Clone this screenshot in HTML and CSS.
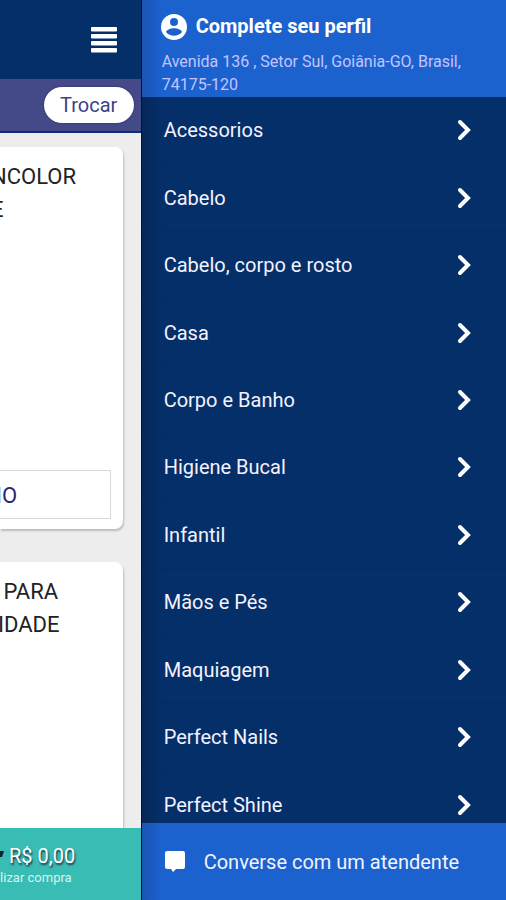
FILE: index.html
```html
<!DOCTYPE html>
<html lang="pt-BR">
<head>
<meta charset="utf-8">
<meta name="viewport" content="width=device-width, initial-scale=1">
<title>Menu</title>
<link rel="stylesheet" href="styles.css">
</head>
<body>
<div class="app">
  <main class="shop">
    <header class="topbar">
      <button class="menu-button" type="button" aria-label="Menu">
        <svg width="28" height="28" viewBox="0 0 28 28"><g fill="#fff"><rect x="1" y="1" width="26" height="4.600" rx="1"/><rect x="1" y="8" width="26" height="4.600" rx="1"/><rect x="1" y="15" width="26" height="4.600" rx="1"/><rect x="1" y="22" width="26" height="4.600" rx="1"/></g></svg>
      </button>
    </header>
    <div class="addressbar"><button class="change" type="button">Trocar</button></div>
    <div class="products">
      <article class="card">
        <h2 class="title">NCOLOR<br>E</h2>
        <button class="add" type="button">IO</button>
      </article>
      <article class="card card-last">
        <h2 class="title title-inner">&nbsp;PARA<br>IDADE</h2>
      </article>
    </div>
    <a class="cart" href="#">
      <span class="total"><svg width="8" height="18" viewBox="0 0 8 18"><path d="M0 4h8L6 10H0zM0 12h4v4H0z" fill="#123"/></svg>R$ 0,00</span>
      <span class="finish">alizar compra</span>
    </a>
  </main>
  <aside class="drawer">
    <header class="profile">
      <a class="profile-link" href="#">
        <svg width="28" height="28" viewBox="0 0 28 28"><circle cx="14" cy="15" r="13" fill="#fff"/><circle cx="14" cy="10" r="4" fill="#1b62cf"/><path d="M6 20c2-5 14-5 16 0-4 5-12 5-16 0z" fill="#1b62cf"/></svg>
        <span>Complete seu perfil</span>
      </a>
      <p class="address">Avenida 136 , Setor Sul, Goiânia-GO, Brasil, 74175-120</p>
    </header>
    <nav class="categories">
      <ul class="list">
        <li><a href="#">Acessorios<svg class="chevron" viewBox="0 0 14 22"><path d="M3 3l8 8-8 8"/></svg></a></li>
        <li><a href="#">Cabelo<svg class="chevron" viewBox="0 0 14 22"><path d="M3 3l8 8-8 8"/></svg></a></li>
        <li><a href="#">Cabelo, corpo e rosto<svg class="chevron" viewBox="0 0 14 22"><path d="M3 3l8 8-8 8"/></svg></a></li>
        <li><a href="#">Casa<svg class="chevron" viewBox="0 0 14 22"><path d="M3 3l8 8-8 8"/></svg></a></li>
        <li><a href="#">Corpo e Banho<svg class="chevron" viewBox="0 0 14 22"><path d="M3 3l8 8-8 8"/></svg></a></li>
        <li><a href="#">Higiene Bucal<svg class="chevron" viewBox="0 0 14 22"><path d="M3 3l8 8-8 8"/></svg></a></li>
        <li><a href="#">Infantil<svg class="chevron" viewBox="0 0 14 22"><path d="M3 3l8 8-8 8"/></svg></a></li>
        <li><a href="#">Mãos e Pés<svg class="chevron" viewBox="0 0 14 22"><path d="M3 3l8 8-8 8"/></svg></a></li>
        <li><a href="#">Maquiagem<svg class="chevron" viewBox="0 0 14 22"><path d="M3 3l8 8-8 8"/></svg></a></li>
        <li><a href="#">Perfect Nails<svg class="chevron" viewBox="0 0 14 22"><path d="M3 3l8 8-8 8"/></svg></a></li>
        <li><a href="#">Perfect Shine<svg class="chevron" viewBox="0 0 14 22"><path d="M3 3l8 8-8 8"/></svg></a></li>
      </ul>
    </nav>
    <a class="chat" href="#">
      <svg width="22" height="22" viewBox="0 0 22 22"><path d="M3 0h16q2 0 2 2v14q0 2-2 2h-7l-3 3-2-3H3q-2 0-2-2V2q0-2 2-2z" fill="#fff"/></svg>
      <span>Converse com um atendente</span>
    </a>
  </aside>
</div>
</body>
</html>
```
FILE: styles.css
```css
* { box-sizing: border-box; }
body { margin: 0; font-family: Roboto, "Liberation Sans", sans-serif; }
a { color: inherit; text-decoration: none; }
button { font: inherit; cursor: pointer; }
svg { display: block; flex: none; }

.app { display: grid; grid-template-columns: 28% 1fr; height: 100vh; overflow: hidden; }

.shop { display: flex; flex-direction: column; min-width: 0; min-height: 0; overflow: hidden; background: #ededed; }
.topbar { display: flex; flex: none; justify-content: flex-end; align-items: center; height: 79px; padding-right: 24px; background: #052f68; }
.menu-button { padding: 0; border: 0; background: none; }
.addressbar { display: flex; flex: none; justify-content: flex-end; align-items: center; height: 54px; padding-right: 8px; background: #444a87; border-bottom: 2px solid #142c78; }
.change { width: 90px; height: 36px; padding: 0; border: 0; border-radius: 18px; background: #fff; color: #3f4187; font-size: 20px; box-shadow: 0 0 2px #20265c; }

.products { display: flex; flex: 1; flex-direction: column; gap: 33px; min-height: 0; padding: 14px 19px 0 0; overflow: hidden; }
.card { display: flex; flex: none; flex-direction: column; justify-content: space-between; height: 382px; padding: 13px 12px 10px 0; background: #fff; border-radius: 0 8px 8px 0; box-shadow: 1px 2px 2px #bdbdbd; }
.card-last { flex: 1; border-radius: 0 8px 0 0; }
.title { margin: 0 0 0 -9px; color: #222; font-size: 22px; font-weight: 400; line-height: 33px; white-space: nowrap; }
.title-inner { margin-left: -2px; }
.add { height: 49px; padding: 2px 0 0; margin-left: -5px; border: 1px solid #d8d8d8; background: #fff; color: #29266f; font-size: 22px; text-align: left; }

.cart { display: flex; flex: none; flex-direction: column; height: 72px; padding-top: 15px; background: #38bcb4; color: #fff; white-space: nowrap; }
.total { display: flex; align-items: center; margin-left: -4px; gap: 5px; font-size: 20px; line-height: 26px; text-shadow: 1px 2px 2px #234; }
.finish { margin-left: -7px; font-size: 13px; line-height: 18px; color: #d5f4f1; }

.drawer { display: flex; flex-direction: column; min-width: 0; min-height: 0; background: #052f68; color: #f4f2ff; box-shadow: -1px 0 0 #04122f; z-index: 1; }
.profile { flex: none; padding: 12px 20px 1px; background: linear-gradient(90deg, #1c55b3, #1b62cf 20px); }
.profile-link { display: flex; align-items: center; gap: 8px; height: 28px; font-size: 20px; font-weight: 700; line-height: 24px; color: #fff; }
.profile-link svg { margin-left: -2px; }
.address { margin: 10px 0 0; font-size: 16px; line-height: 23px; color: #c3c4ff; }

.categories { flex: 1; min-height: 0; overflow: hidden; background: linear-gradient(90deg, #05285a, #052f68 20px); }
.list { display: grid; grid-auto-rows: 1fr; height: calc(100% + 16px); margin: 0; padding: 0; list-style: none; font-size: 20px; }
.list a { display: flex; align-items: center; justify-content: space-between; height: 100%; padding: 0 35px 0 22px; border-bottom: 1px solid #042c61; }
.chevron { width: 14px; height: 22px; fill: none; stroke: #fff; stroke-width: 4; stroke-linecap: round; }

.chat { display: flex; flex: none; align-items: center; gap: 18px; height: 77px; padding-left: 22px; background: linear-gradient(90deg, #1c55b3, #1b62cf 20px); font-size: 20px; }
```
